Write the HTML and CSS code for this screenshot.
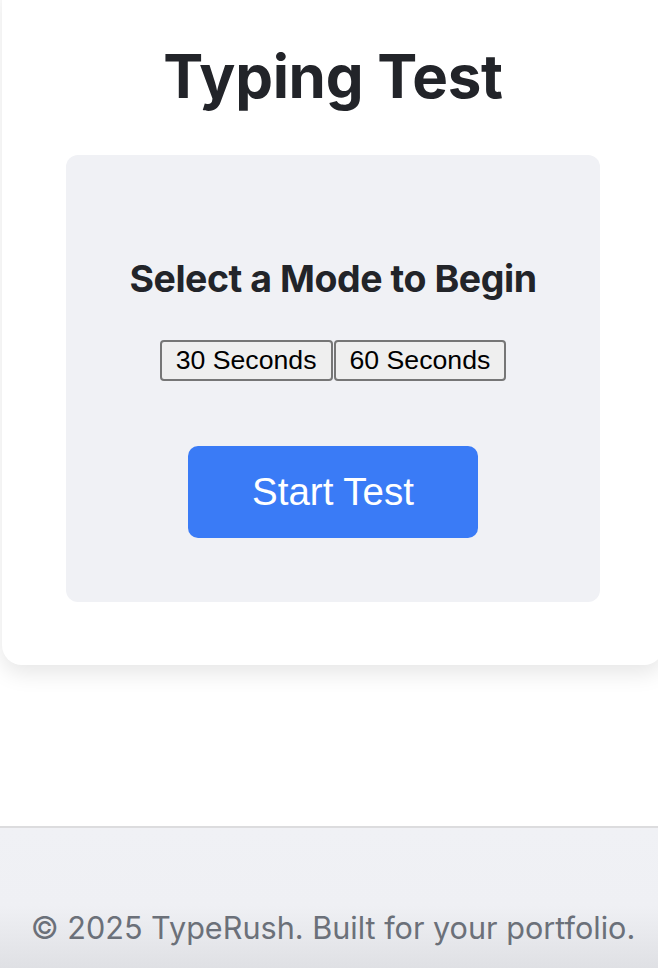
FILE: index.html
```html
<!DOCTYPE html>
<html lang="en">
<head>
<meta charset="utf-8">
<title>TypeRush – Typing Test</title>
<link rel="stylesheet" href="styles.css">
</head>
<body>
<main class="page">
  <section class="card">
    <h1 class="title">Typing Test</h1>
    <div class="panel">
      <h2 class="panel-title">Select a Mode to Begin</h2>
      <div class="modes">
        <button class="mode-btn" type="button">30 Seconds</button>
        <button class="mode-btn" type="button">60 Seconds</button>
      </div>
      <button class="start-btn" type="button">Start Test</button>
    </div>
  </section>
</main>
<footer class="footer">
  <p class="footer-text">© 2025 TypeRush. Built for your portfolio.</p>
</footer>
</body>
</html>
```
FILE: styles.css
```css
html, body {
  margin: 0;
  padding: 0;
  background: #ffffff;
  overflow-x: hidden;
}

body {
  font-family: Inter, "Noto Sans", sans-serif;
  color: #222429;
}

.page {
  padding: 0 0 0 2px;
}

.card {
  width: 662px;
  box-sizing: border-box;
  margin-top: -20px;
  padding: 60px 0 63px;
  background: #ffffff;
  border-radius: 20px;
  box-shadow: 0 8px 22px rgba(0, 0, 0, 0.10);
  display: flex;
  flex-direction: column;
  align-items: center;
}

.title {
  margin: 0;
  font-size: 60px;
  line-height: 72px;
  font-weight: 700;
  letter-spacing: -0.3px;
  color: #222429;
}

.panel {
  margin-top: 43px;
  width: 534px;
  box-sizing: border-box;
  padding: 100px 0 64px;
  background: #f0f1f5;
  border-radius: 12px;
  display: flex;
  flex-direction: column;
  align-items: center;
}

.panel-title {
  margin: 0;
  font-size: 37.5px;
  line-height: 48px;
  font-weight: 700;
  letter-spacing: -0.45px;
  color: #222429;
}

.modes {
  margin-top: 37px;
  display: flex;
  gap: 1px;
}

.mode-btn {
  font-family: "Liberation Sans", Arial, sans-serif;
  font-size: 26.67px;
  line-height: 31px;
  padding: 3px 14px;
  border: 2px solid #767676;
  border-radius: 4px;
  background: #efefef;
  color: #000000;
}

.start-btn {
  margin-top: 65px;
  font-family: "Liberation Sans", Arial, sans-serif;
  font-size: 38.5px;
  line-height: 42px;
  padding: 25px 0;
  width: 290px;
  border: none;
  border-radius: 10px;
  background: #3a7bf6;
  color: #ffffff;
}

.footer {
  margin-top: 161px;
  border-top: 2px solid #dcdcde;
  background: linear-gradient(to bottom, #f0f1f5 0%, #eff0f4 55%, #dfe0e4 100%);
  padding: 82px 0 23px 8px;
  text-align: center;
}

.footer-text {
  margin: 0;
  font-size: 30.6px;
  line-height: 36px;
  color: #6b7079;
}
```
